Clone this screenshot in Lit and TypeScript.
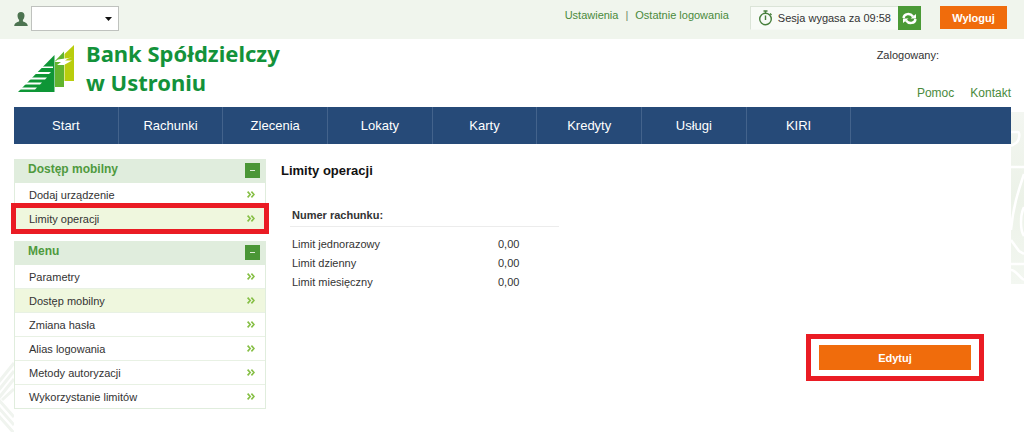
import { LitElement, html, css } from "lit";
import { customElement, property } from "lit/decorators.js";
import { classMap } from "lit/directives/class-map.js";

interface MenuItem {
  label: string;
  active?: boolean;
  marked?: boolean;
}

const NAV = ["Start", "Rachunki", "Zlecenia", "Lokaty", "Karty", "Kredyty", "Usługi", "KIRI"];

const MOBILE_ITEMS: MenuItem[] = [
  { label: "Dodaj urządzenie" },
  { label: "Limity operacji", active: true, marked: true },
];

const MENU_ITEMS: MenuItem[] = [
  { label: "Parametry" },
  { label: "Dostęp mobilny", active: true },
  { label: "Zmiana hasła" },
  { label: "Alias logowania" },
  { label: "Metody autoryzacji" },
  { label: "Wykorzystanie limitów" },
];

const LIMITS: [string, string][] = [
  ["Limit jednorazowy", "0,00"],
  ["Limit dzienny", "0,00"],
  ["Limit miesięczny", "0,00"],
];

@customElement("side-panel")
export class SidePanel extends LitElement {
  @property() heading = "";
  @property({ attribute: false }) items: MenuItem[] = [];

  static styles = css`
    :host {
      display: block;
      font-size: 11px;
    }
    .head {
      display: flex;
      justify-content: space-between;
      align-items: flex-start;
      height: 24px;
      padding: 0 6px 0 14px;
      background: #e0eddd;
      box-sizing: border-box;
    }
    .title {
      margin: 0;
      font-size: 12px;
      line-height: 20px;
      font-weight: bold;
      color: #4f9a3e;
    }
    .toggle {
      display: grid;
      place-items: center;
      width: 15px;
      height: 15px;
      margin: 4px 0 0;
      padding: 0;
      border: 0;
      background: #4a9636;
    }
    .list {
      list-style: none;
      margin: 0;
      padding: 0;
      border: 1px solid #e0eddd;
      border-top: 0;
      background: #fff;
    }
    .item {
      height: 24px;
      box-sizing: border-box;
      border-bottom: 1px solid #e8f1e4;
    }
    .item:last-child {
      height: 23px;
      border-bottom: 0;
    }
    .active {
      background: #eff7de;
    }
    .marked {
      outline: 5px solid #ea1c24;
      outline-offset: -1px;
    }
    .link {
      display: flex;
      align-items: center;
      justify-content: space-between;
      height: 100%;
      padding: 0 10px 0 14px;
      color: #333;
      text-decoration: none;
    }
  `;

  render() {
    return html`
      <div class="head">
        <h2 class="title">${this.heading}</h2>
        <button class="toggle" type="button" aria-label="Zwiń">
          <svg width="5" height="1" viewBox="0 0 5 1"><rect width="5" height="1" fill="#dcebd6" /></svg>
        </button>
      </div>
      <ul class="list">
        ${this.items.map(
          (i) => html`<li class=${classMap({ item: true, active: !!i.active, marked: !!i.marked })}>
            <a class="link" href="#"
              >${i.label}
              <svg width="8" height="7" viewBox="0 0 8 7" fill="none" stroke="#86bf45" stroke-width="1.6">
                <path d="M.6 .6 3.2 3.5 .6 6.4M4.4 .6 7 3.5 4.4 6.4" />
              </svg>
            </a>
          </li>`
        )}
      </ul>
    `;
  }
}

@customElement("app-root")
export class AppRoot extends LitElement {
  static styles = css`
    :host {
      display: flex;
      flex-direction: column;
      min-height: 100vh;
      background: #fff;
      color: #333;
      font: 11px/16px "Liberation Sans", Arial, sans-serif;
    }
    a {
      color: #4a8a3c;
      text-decoration: none;
    }
    .topbar {
      display: flex;
      align-items: flex-start;
      height: 39px;
      box-sizing: border-box;
      padding: 6px 17px 0 14px;
      background: #f0f5ed;
    }
    .account {
      display: flex;
      align-items: center;
      gap: 3px;
    }
    .picker {
      display: grid;
      align-items: center;
    }
    .picker > * {
      grid-area: 1 / 1;
    }
    .select {
      appearance: none;
      width: 88px;
      height: 25px;
      border: 1px solid #bfc2be;
      border-radius: 0;
      background: #fff;
      margin: 0;
    }
    .arrow {
      justify-self: end;
      margin-right: 7px;
      pointer-events: none;
    }
    .quick {
      display: flex;
      gap: 7px;
      margin: 1px 21px 0 auto;
    }
    .sep {
      color: #6b8a66;
    }
    .session {
      display: flex;
      height: 24px;
    }
    .timer {
      display: flex;
      align-items: center;
      gap: 5px;
      padding: 0 7px;
      border: 1px solid #dbe4d8;
      border-right: 0;
      border-bottom-color: #f5f8f4;
      background: #f8fbf7;
      box-sizing: border-box;
    }
    .refresh {
      width: 23px;
      height: 24px;
      padding: 0;
      border: 0;
      display: grid;
      place-items: center;
      background: #4a9a36;
    }
    .cta {
      border: 0;
      margin: 0;
      padding: 0;
      background: #f06c0c;
      color: #fff;
      font: bold 11px/16px "Liberation Sans", Arial, sans-serif;
    }
    .logout {
      width: 67px;
      height: 23px;
      margin-left: 19px;
    }
    .edit {
      width: 152px;
      height: 25px;
    }
    .page {
      position: relative;
      flex: 1;
      padding: 0 13px 0 14px;
    }
    .mark {
      position: absolute;
    }
    .mark-left {
      left: 0;
      top: 316px;
    }
    .mark-right {
      right: 0;
      top: 73px;
    }
    .header {
      display: flex;
      justify-content: space-between;
      height: 68px;
    }
    .brand {
      display: flex;
      align-items: flex-start;
      gap: 11px;
      padding-left: 4px;
    }
    .logo {
      margin-top: 5px;
    }
    .name {
      font: bold 22px/29px "Noto Sans", "Open Sans", sans-serif;
      color: #13923a;
    }
    .user {
      display: flex;
      flex-direction: column;
      justify-content: space-between;
      padding: 8px 0 6px;
    }
    .help {
      display: flex;
      justify-content: flex-end;
      gap: 16px;
      font-size: 12px;
    }
    .logged {
      margin-right: 72px;
    }
    .nav {
      display: flex;
      height: 37px;
      background: #264a78;
    }
    .tab {
      flex: 0 0 10.5%;
      box-sizing: border-box;
      border-right: 1px solid #43638c;
      color: #fff;
      font-size: 13px;
      line-height: 37px;
      text-align: center;
    }
    .columns {
      display: flex;
      gap: 15px;
      padding-top: 15px;
    }
    .side {
      flex: 0 0 252px;
      display: flex;
      flex-direction: column;
      gap: 10px;
    }
    .main {
      flex: 1;
      display: flex;
      flex-direction: column;
    }
    .heading {
      margin: 3px 0 0;
      font-size: 13px;
      line-height: 18px;
      color: #111;
    }
    .limits {
      margin: 25px 0 0 9px;
      width: 269px;
      border-collapse: collapse;
    }
    .limits th,
    .limits td {
      height: 19px;
      padding: 0 0 0 2px;
      text-align: left;
      font-weight: normal;
    }
    .limits .account-no {
      padding-bottom: 2px;
      font-weight: bold;
      border-bottom: 1px solid #ececec;
    }
    .limits tbody::before {
      content: "";
      display: block;
      height: 7px;
    }
    .limits .amount {
      width: 61px;
    }
    .marked {
      align-self: flex-end;
      display: flex;
      margin: 43px 27px 0 0;
      padding: 6px 8px;
      border: 5px solid #ea1c24;
    }
  `;

  render() {
    return html`
      <header class="topbar">
        <div class="account">
          <svg width="14" height="14" viewBox="0 0 14 14" fill="#4c7350">
            <path
              d="M7 0C9.3 0 10.6 1.5 10.5 3.7 10.4 5.6 9.7 7 8.9 7.8V9.3C9.2 10 13.6 10.2 13.8 14H.2C.4 10.2 4.8 10 5.1 9.3V7.8C4.3 7 3.6 5.6 3.5 3.7 3.4 1.5 4.7 0 7 0Z"
            />
          </svg>
          <div class="picker">
            <select class="select" aria-label="Profil"><option></option></select>
            <svg class="arrow" width="7" height="4" viewBox="0 0 7 4"><path d="M0 0h7L3.5 4Z" fill="#111" /></svg>
          </div>
        </div>
        <nav class="quick">
          <a href="#">Ustawienia</a><span class="sep">|</span><a href="#">Ostatnie logowania</a>
        </nav>
        <div class="session">
          <div class="timer">
            <svg width="15" height="16" viewBox="0 0 15 16" fill="none" stroke="#477f3c" stroke-width="1.4">
              <circle cx="7.5" cy="9" r="5.8" />
              <path d="M5.5 1h4M7.5 1v2.5M7.5 5.5V10M12 3.5l1.5 1.5" />
            </svg>
            <span>Sesja wygasa za 09:58</span>
          </div>
          <button class="refresh" type="button" aria-label="Odśwież sesję">
            <svg width="15" height="13" viewBox="0 0 15 13" fill="none" stroke="#fff" stroke-width="2.4">
              <path d="M1.5 6C2 1.5 8 .5 11 4.5M13.5 7C13 11.5 7 12.5 4 8.5" />
              <path d="M14 2V6.5H8.5ZM1 11V6.5H6.5Z" fill="#fff" stroke="none" />
            </svg>
          </button>
        </div>
        <button class="cta logout" type="button">Wyloguj</button>
      </header>

      <div class="page">
        <svg class="mark mark-left" width="14" height="77" viewBox="0 0 14 77" fill="none" stroke="#f0f4ef" stroke-width="3">
          <path d="M-2 28 14 8M-2 36 14 16M-2 44 14 24M2 45 14 34M-2 44 14 62M-2 52 14 70M-2 60 14 78" />
        </svg>
        <svg class="mark mark-right" width="13" height="172" viewBox="0 0 13 172">
          <defs>
            <linearGradient id="fade" x1="0" y1="0" x2="0" y2="1">
              <stop offset="0" stop-color="#f3f6f1" />
              <stop offset=".5" stop-color="#ecf2e8" />
              <stop offset="1" stop-color="#f3f7f1" />
            </linearGradient>
          </defs>
          <path d="M0 0H13V172H0Z" fill="url(#fade)" />
          <path
            d="M0 20H7C9 20 9 28 5 31L0 34M0 55H13M13 62C7 80 2 95 0 118M13 95C9 103 9 118 13 124M0 128 8 139 13 142M0 152H13M0 158C5 158 8 165 13 168"
            fill="none"
            stroke="#fff"
            stroke-width="2.5"
          />
        </svg>

        <div class="header">
          <div class="brand">
            <svg class="logo" width="57" height="49" viewBox="0 0 57 49">
              <path d="M46.5 10 56 1V37H46.5Z" fill="#b9cd0d" />
              <path d="M37 17 46 7.5V43H37Z" fill="#62b42e" />
              <path d="M36.5 11V48H0Z" fill="#0e9636" />
              <path
                d="M54 13.5 40 15.5 36.500 18H43L39 21H46L54 16.5H47L50 14.5Z
                   M23 22.5H35V24H20.5ZM18 28H33L31 30H16ZM13 33.500H29L27 35.500H11ZM8 38.500H24L22 40.500H6ZM3.500 43.500H19L17 45.500H1.500Z"
                fill="#fff"
              />
            </svg>
            <div class="name">Bank Spółdzielczy<br />w Ustroniu</div>
          </div>
          <div class="user">
            <div class="logged">Zalogowany:</div>
            <div class="help"><a href="#">Pomoc</a><a href="#">Kontakt</a></div>
          </div>
        </div>

        <nav class="nav">${NAV.map((t) => html`<a class="tab" href="#">${t}</a>`)}</nav>

        <div class="columns">
          <aside class="side">
            <side-panel heading="Dostęp mobilny" .items=${MOBILE_ITEMS}></side-panel>
            <side-panel heading="Menu" .items=${MENU_ITEMS}></side-panel>
          </aside>
          <main class="main">
            <h1 class="heading">Limity operacji</h1>
            <table class="limits">
              <thead>
                <tr><th class="account-no" colspan="2">Numer rachunku:</th></tr>
              </thead>
              <tbody>
                ${LIMITS.map(
                  ([label, value]) => html`<tr><th scope="row">${label}</th><td class="amount">${value}</td></tr>`
                )}
              </tbody>
            </table>
            <div class="marked"><button class="cta edit" type="button">Edytuj</button></div>
          </main>
        </div>
      </div>
    `;
  }
}
